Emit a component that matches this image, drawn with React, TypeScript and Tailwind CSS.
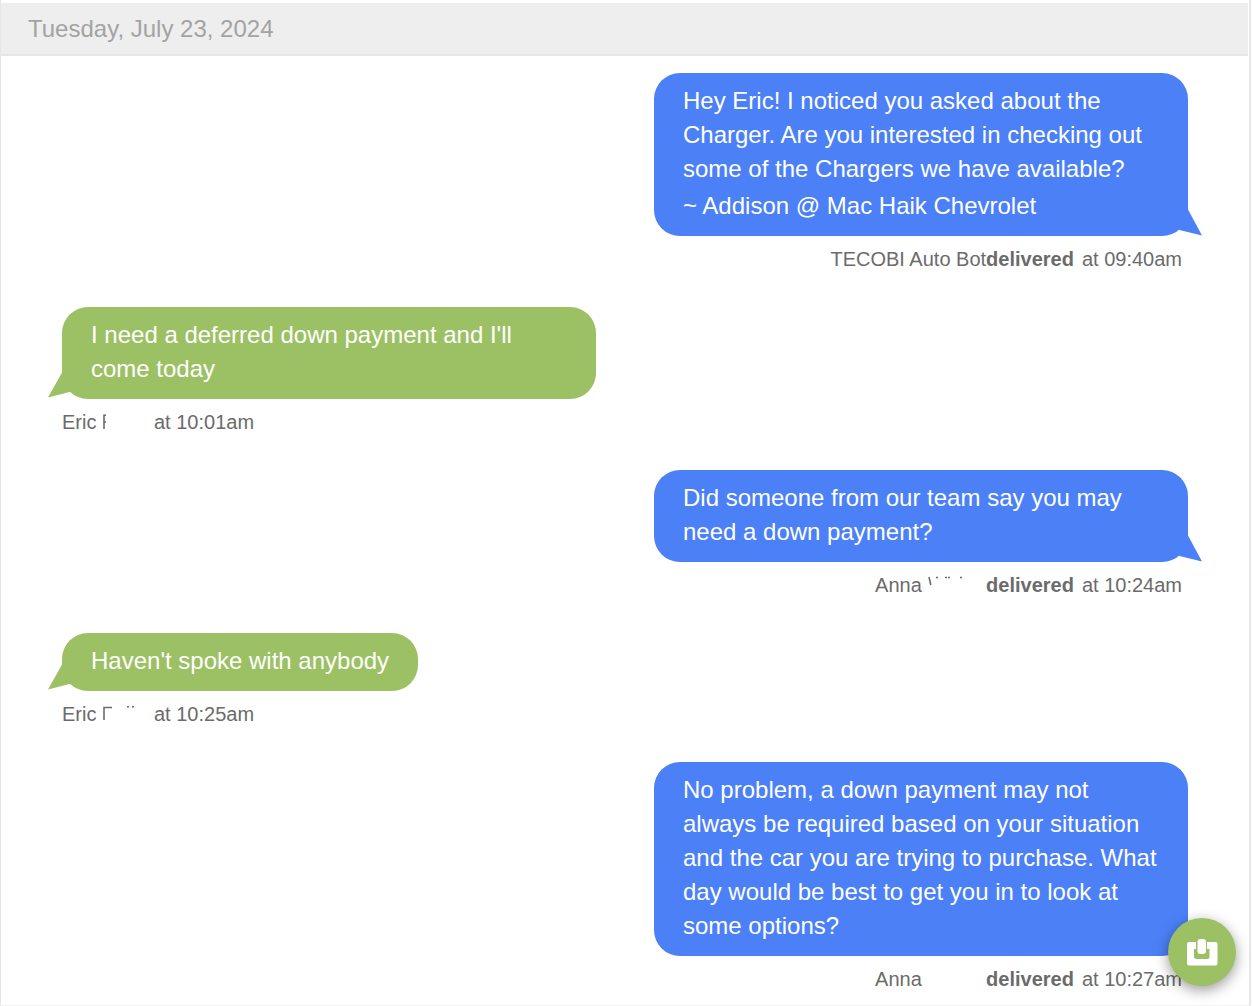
import React from "react";

interface IMessage {
  id: number;
  direction: "inbound" | "outbound";
  lines: string[];
  signature?: string;
  sender: React.ReactNode;
  time: string;
}

// what is left of the last names after they were wiped out
const RedactedName: React.FC<{ d: string }> = ({ d }) => (
  <svg
    width="44"
    height="30"
    viewBox="0 0 44 30"
    fill="none"
    stroke="#6b6b6b"
    strokeWidth="1.6"
    aria-hidden="true"
  >
    <path d={d} />
  </svg>
);

const messages: IMessage[] = [
  {
    id: 1,
    direction: "outbound",
    lines: [
      "Hey Eric! I noticed you asked about the",
      "Charger. Are you interested in checking out",
      "some of the Chargers we have available?",
    ],
    signature: "~ Addison @ Mac Haik Chevrolet",
    sender: "TECOBI Auto Bot",
    time: "09:40am",
  },
  {
    id: 2,
    direction: "inbound",
    lines: ["I need a deferred down payment and I'll", "come today"],
    sender: (
      <span className="flex w-[92px] gap-1.5">
        Eric
        <RedactedName d="M2 7.5 V22 M2 8.3 H4 M2 15 H4" />
      </span>
    ),
    time: "10:01am",
  },
  {
    id: 3,
    direction: "outbound",
    lines: ["Did someone from our team say you may", "need a down payment?"],
    sender: (
      <span className="flex w-[111px] gap-1.5">
        Anna
        <RedactedName d="M1 7 L2.8 15 M8 7.5 H10 M17 7.5 H19 M20 7.5 H22 M32 7.5 H34" />
      </span>
    ),
    time: "10:24am",
  },
  {
    id: 4,
    direction: "inbound",
    lines: ["Haven't spoke with anybody"],
    sender: (
      <span className="flex w-[92px] gap-1.5">
        Eric
        <RedactedName d="M2 21 V8.5 H10 M25 7.8 H27 M30 7.8 H32" />
      </span>
    ),
    time: "10:25am",
  },
  {
    id: 5,
    direction: "outbound",
    lines: [
      "No problem, a down payment may not",
      "always be required based on your situation",
      "and the car you are trying to purchase. What",
      "day would be best to get you in to look at",
      "some options?",
    ],
    sender: <span className="flex w-[111px]">Anna</span>,
    time: "10:27am",
  },
];

const InboundTail: React.FC = () => (
  <svg
    className="absolute -left-3.5 bottom-0 h-9 w-10 text-[#9bc164]"
    viewBox="0 0 40 36"
    fill="currentColor"
    aria-hidden="true"
  >
    <path d="M14 9.5 L0 34.5 L21.5 29 L32 20 L18 4 Z" />
  </svg>
);

const OutboundTail: React.FC = () => (
  <svg
    className="absolute -right-3.5 bottom-0 h-9 w-10 text-[#4b80f7]"
    viewBox="0 0 40 36"
    fill="currentColor"
    aria-hidden="true"
  >
    <path d="M26 9.5 L40 35.5 L17.5 30 L8 20 L22 4 Z" />
  </svg>
);

const Message: React.FC<{ message: IMessage }> = ({ message }) => {
  const outbound = message.direction === "outbound";

  return (
    <li className={`flex flex-col ${outbound ? "items-end" : "items-start"}`}>
      <div
        className={`relative max-w-[534px] rounded-[26px] px-[29px] pb-[13px] pt-[11px] text-2xl leading-[34px] text-white ${
          outbound ? "bg-[#4b80f7]" : "bg-[#9bc164]"
        } ${message.lines.length > 1 ? "w-full" : ""}`}
      >
        {outbound ? <OutboundTail /> : <InboundTail />}
        <p className="relative">
          {message.lines.map((line) => (
            <span key={line} className="block whitespace-nowrap">
              {line}
            </span>
          ))}
        </p>
        {message.signature && (
          <p className="relative pt-[3px]">{message.signature}</p>
        )}
      </div>
      <div
        className={`mt-2 flex text-xl leading-[30px] text-[#6b6b6b] ${
          outbound ? "mr-1.5" : ""
        }`}
      >
        <span>{message.sender}</span>
        {outbound && <b className="mr-2">delivered</b>}
        <span>at {message.time}</span>
      </div>
    </li>
  );
};

const App: React.FC = () => {
  return (
    <div className="h-screen overflow-hidden bg-white pr-px font-['Liberation_Sans',Arial,sans-serif]">
      <main className="h-full overflow-hidden border-b border-l border-r-2 border-[#e6e6e6] border-b-[#f2f2f2] pr-px pt-[3px]">
        <h2 className="border-b-2 border-[#e6e6e6] bg-[#eeeeee] px-[27px] pb-[7px] pt-2 text-2xl leading-9 text-[#a3a3a3]">
          Tuesday, July 23, 2024
        </h2>
        <ul className="flex flex-col gap-[33px] pl-[61px] pr-[60px] pt-[17px]">
          {messages.map((message) => (
            <Message key={message.id} message={message} />
          ))}
        </ul>
      </main>
      <button
        type="button"
        aria-label="Open inbox"
        className="fixed bottom-5 right-4 flex size-[68px] items-center justify-center rounded-full bg-[#9bc164] shadow-[0_4px_14px_rgba(0,0,0,0.4)]"
      >
        <svg width="32" height="28" viewBox="0 0 32 28" aria-hidden="true">
          <path
            fill="#fff"
            d="M2 4 H10 V11 H8 V18.5 Q8 21 10.5 21 H21 Q23.5 21 23.5 18.5 V11 H21 V4 H29.5 Q31.5 4 31.5 6 V25.5 Q31.5 27.5 29.5 27.5 H3 Q1 27.5 1 25.5 V6 Q1 4 3 4 Z"
          />
          <rect x="11.5" y="1" width="8.5" height="15" rx="3" fill="#fff" />
        </svg>
      </button>
    </div>
  );
};

export default App;
